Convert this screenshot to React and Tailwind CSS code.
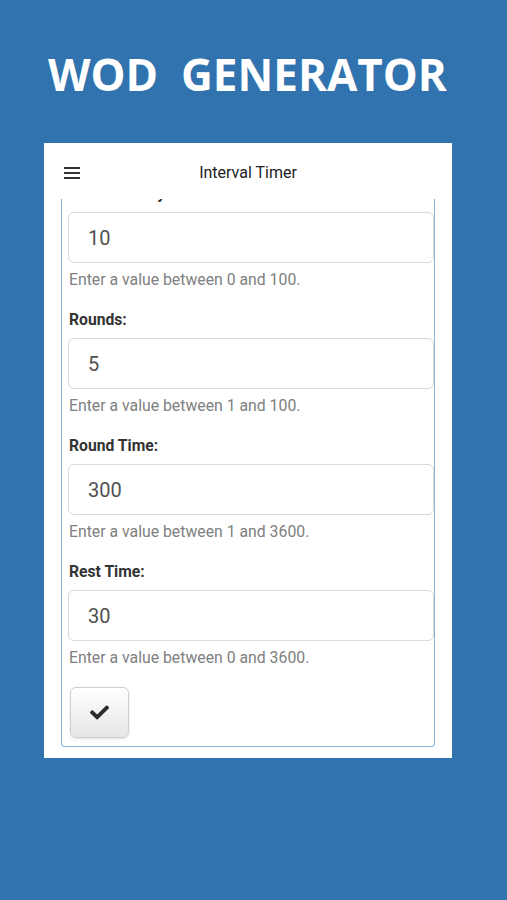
import React from "react";
import { FaCheck } from "react-icons/fa";

const fields = [
  { label: "Lead-in Delay:", value: "10", help: "Enter a value between 0 and 100." },
  { label: "Rounds:", value: "5", help: "Enter a value between 1 and 100." },
  { label: "Round Time:", value: "300", help: "Enter a value between 1 and 3600." },
  { label: "Rest Time:", value: "30", help: "Enter a value between 0 and 3600." },
];

function Field({ label, value, help }) {
  return (
    <div className="mb-[20px]">
      <label className="block h-5 leading-5 mb-2 pl-px text-[15.7px] font-bold text-[#333]">{label}</label>
      <div className="h-[51px] flex items-center pl-[19px] rounded-md border border-[#d9d9d9] bg-white text-[20px] text-[#505050]">
        {value}
      </div>
      <p className="mt-[7px] h-5 leading-5 pl-px text-[15.8px] text-[#808080]">{help}</p>
    </div>
  );
}

export default function App() {
  return (
    <div className="w-full h-[900px] bg-[#3073ae] flex flex-col" style={{ fontFamily: "Roboto, 'Liberation Sans', sans-serif" }}>
      <h1
        className="mt-[46px] h-[56px] leading-[56px] pl-[48px] whitespace-pre text-white text-[44px] font-bold"
        style={{ fontFamily: "'Open Sans', 'Liberation Sans', sans-serif" }}
      >
        {"WOD  GENERATOR"}
      </h1>

      <div className="mt-[41px] ml-[44px] w-[408px] h-[615px] bg-white flex flex-col">
        {/* app bar */}
        <div className="h-[56px] relative flex items-center justify-center shrink-0">
          <div className="absolute left-[20px] top-[24px] flex flex-col gap-[3px]">
            <span className="block w-[16px] h-[2px] bg-[#333]" />
            <span className="block w-[16px] h-[2px] bg-[#333]" />
            <span className="block w-[16px] h-[2px] bg-[#333]" />
          </div>
          <span className="text-[16px] text-[#222] mt-[3px]">Interval Timer</span>
        </div>

        {/* scrolled content */}
        <div className="flex-1 overflow-hidden pl-[17px] pb-[11px]">
          <div className="-mt-[15px] w-[374px] h-[calc(100%+15px)] border-[1.5px] border-t-0 border-[#8db2d9] rounded-b-[4px] pl-[6px]">
            {fields.map((f) => (
              <Field key={f.label} {...f} />
            ))}
            <button className="-mt-[1px] ml-[2px] w-[59px] h-[51px] flex items-center justify-center rounded-md border border-[#cfcfcf] bg-gradient-to-b from-white to-[#e6e6e6] shadow-sm">
              <FaCheck className="w-[19px] h-[19px] text-[#2b2b2b]" />
            </button>
          </div>
        </div>
      </div>
    </div>
  );
}
